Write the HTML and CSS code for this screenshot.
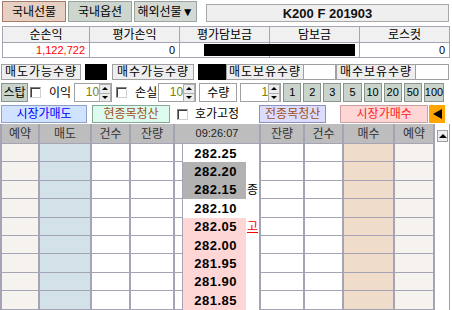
FILE: index.html
```html
<!DOCTYPE html>
<html lang="ko">
<head>
  <meta charset="UTF-8">
  <title>선물 주문</title>
  <link rel="stylesheet" href="styles.css">
</head>
<body>
<div class="screen">

  <!-- 상단 탭 -->
  <div class="top-bar">
    <div class="tab tab-on">국내선물</div>
    <div class="tab tab-opt">국내옵션</div>
    <div class="tab tab-more">해외선물▼</div>
    <div class="title">K200 F 201903</div>
  </div>

  <!-- 손익 요약 -->
  <div class="summary">
    <div class="sh">순손익</div>
    <div class="sh">평가손익</div>
    <div class="sh">평가담보금</div>
    <div class="sh">담보금</div>
    <div class="sh">로스컷</div>
    <div class="sv red">1,122,722</div>
    <div class="sv">0</div>
    <div class="sv"><span class="mask mask-a"></span></div>
    <div class="sv sv-left"><span class="mask mask-b"></span></div>
    <div class="sv">0</div>
  </div>

  <!-- 수량 -->
  <div class="qty-row">
    <div class="lbl lbl-1">매도가능수량</div>
    <div class="blk blk-1"></div>
    <div class="lbl lbl-2">매수가능수량</div>
    <div class="blk blk-2"></div>
    <div class="lbl lbl-3">매도보유수량</div>
    <div class="wbox wbox-1"></div>
    <div class="lbl lbl-4">매수보유수량</div>
    <div class="wbox wbox-2"></div>
  </div>

  <!-- 스탑 -->
  <div class="stop-row">
    <div class="stop-btn">스탑</div>
    <span class="chk chk-1"></span>
    <span class="txt txt-gain">이익</span>
    <div class="spin spin-1"><span class="spin-val">10</span><span class="spin-btns"><i class="up"></i><i class="down"></i></span></div>
    <span class="chk chk-2"></span>
    <span class="txt txt-loss">손실</span>
    <div class="spin spin-2"><span class="spin-val">10</span><span class="spin-btns"><i class="up"></i><i class="down"></i></span></div>
    <div class="qty-lbl">수량</div>
    <div class="spin spin-3"><span class="spin-val">1</span><span class="spin-btns"><i class="up"></i><i class="down"></i></span></div>
    <div class="nums">
      <div class="num">1</div>
      <div class="num">2</div>
      <div class="num">3</div>
      <div class="num">5</div>
      <div class="num">10</div>
      <div class="num">20</div>
      <div class="num">50</div>
      <div class="num">100</div>
    </div>
  </div>

  <!-- 주문 버튼 -->
  <div class="action-row">
    <div class="act act-sell">시장가매도</div>
    <div class="act act-clear1">현종목청산</div>
    <span class="chk chk-3"></span>
    <span class="txt txt-fix">호가고정</span>
    <div class="act act-clear2">전종목청산</div>
    <div class="act act-buy">시장가매수</div>
    <div class="collapse"><i></i></div>
  </div>

  <!-- 호가창 -->
  <div class="book">
    <div class="h">예약</div>
    <div class="h">매도</div>
    <div class="h">건수</div>
    <div class="h">잔량</div>
    <div class="h h-time">09:26:07</div>
    <div class="h">잔량</div>
    <div class="h">건수</div>
    <div class="h">매수</div>
    <div class="h">예약</div>
    <div class="scroll"><div class="scroll-up"><i></i></div></div>

    <div class="c rsv"></div><div class="c sell"></div><div class="c"></div><div class="c"></div><div class="c gap"></div><div class="price">282.25</div><div class="mark"></div><div class="c"></div><div class="c"></div><div class="c buy"></div><div class="c rsv"></div>
    <div class="c rsv"></div><div class="c sell"></div><div class="c"></div><div class="c"></div><div class="c gap"></div><div class="price grey">282.20</div><div class="mark"></div><div class="c"></div><div class="c"></div><div class="c buy"></div><div class="c rsv"></div>
    <div class="c rsv"></div><div class="c sell"></div><div class="c"></div><div class="c"></div><div class="c gap"></div><div class="price grey">282.15</div><div class="mark">종</div><div class="c"></div><div class="c"></div><div class="c buy"></div><div class="c rsv"></div>
    <div class="c rsv"></div><div class="c sell"></div><div class="c"></div><div class="c"></div><div class="c gap"></div><div class="price">282.10</div><div class="mark"></div><div class="c"></div><div class="c"></div><div class="c buy"></div><div class="c rsv"></div>
    <div class="c rsv"></div><div class="c sell"></div><div class="c"></div><div class="c"></div><div class="c gap"></div><div class="price pink">282.05</div><div class="mark mark-high">고</div><div class="c"></div><div class="c"></div><div class="c buy"></div><div class="c rsv"></div>
    <div class="c rsv"></div><div class="c sell"></div><div class="c"></div><div class="c"></div><div class="c gap"></div><div class="price pink">282.00</div><div class="mark"></div><div class="c"></div><div class="c"></div><div class="c buy"></div><div class="c rsv"></div>
    <div class="c rsv"></div><div class="c sell"></div><div class="c"></div><div class="c"></div><div class="c gap"></div><div class="price pink">281.95</div><div class="mark"></div><div class="c"></div><div class="c"></div><div class="c buy"></div><div class="c rsv"></div>
    <div class="c rsv"></div><div class="c sell"></div><div class="c"></div><div class="c"></div><div class="c gap"></div><div class="price pink">281.90</div><div class="mark"></div><div class="c"></div><div class="c"></div><div class="c buy"></div><div class="c rsv"></div>
    <div class="c rsv"></div><div class="c sell"></div><div class="c"></div><div class="c"></div><div class="c gap"></div><div class="price pink">281.85</div><div class="mark"></div><div class="c"></div><div class="c"></div><div class="c buy"></div><div class="c rsv"></div>
  </div>

</div>
</body>
</html>
```

FILE: styles.css
```css
body {
  margin: 0;
  font-family: "Liberation Sans", "Noto Sans CJK KR", sans-serif;
  font-size: 12px;
  color: #000;
  background: #fff;
}
.screen {
  width: 452px;
  height: 310px;
  overflow: hidden;
}

/* 상단 탭 */
.top-bar {
  display: flex;
  align-items: flex-start;
  height: 21px;
  padding: 1px 0 0 2px;
}
.tab {
  box-sizing: border-box;
  height: 21px;
  margin-right: 2px;
  display: flex;
  align-items: center;
  justify-content: center;
  border: 1px solid #9aa49d;
  background: #ccd6cf;
  line-height: 1;
}
.tab-on { width: 64px; background: #e6d0c3; border-color: #a87a68; }
.tab-opt { width: 64px; }
.tab-more { width: 63px; background: #d3dad5; }
.title {
  box-sizing: border-box;
  width: 243px;
  height: 18px;
  margin: 3px 0 0 7px;
  border: 1px solid #a8a8a8;
  background: #efefef;
  font-size: 13px;
  font-weight: bold;
  display: flex;
  align-items: center;
  justify-content: center;
  color: #111;
}

/* 요약 */
.summary {
  display: grid;
  grid-template-columns: 87px 90px 90px 90px 90px;
  grid-template-rows: 16px 15px;
  width: fit-content;
  margin: 4px 0 0 2px;
  border-left: 1px solid #a4a4b4;
  border-top: 1px solid #a4a4b4;
}
.sh, .sv {
  box-sizing: border-box;
  border-right: 1px solid #a4a4b4;
  border-bottom: 1px solid #a4a4b4;
  display: flex;
  align-items: center;
  line-height: 1;
}
.sh {
  background: #f0f0f0;
  justify-content: center;
}
.sv {
  justify-content: flex-end;
  padding-right: 4px;
  font-size: 11px;
}
.sv-left { justify-content: flex-start; }
.red { color: #ff0000; }
.mask {
  display: block;
  height: 12px;
  background: #000;
}
.mask-a { width: 66px; margin-right: -5px; }
.mask-b { width: 87px; }

/* 수량 */
.qty-row {
  display: flex;
  height: 16px;
  margin-top: 6px;
  padding-left: 1px;
}
.lbl {
  box-sizing: border-box;
  height: 16px;
  border: 1px solid #a0a0a0;
  background: #eeeeee;
  display: flex;
  align-items: center;
  justify-content: center;
  letter-spacing: 1px;
  line-height: 1;
}
.lbl-1 { width: 80px; }
.lbl-2 { width: 82px; margin-left: 5px; }
.lbl-3 { width: 78px; }
.lbl-4 { width: 80px; }
.blk { height: 16px; background: #000; }
.blk-1 { width: 22px; margin-left: 4px; }
.blk-2 { width: 28px; margin-left: 4px; }
.wbox {
  box-sizing: border-box;
  height: 16px;
  border: 1px solid #a0a0a0;
  border-left: none;
  background: #fff;
}
.wbox-1 { width: 32px; }
.wbox-2 { width: 33px; }

/* 스탑 */
.stop-row {
  display: flex;
  align-items: center;
  height: 19px;
  margin-top: 3px;
  padding-left: 1px;
}
.stop-btn {
  box-sizing: border-box;
  width: 27px;
  height: 19px;
  border: 1px solid #8a938c;
  background: #c8d4cc;
  display: flex;
  align-items: center;
  justify-content: center;
  line-height: 1;
}
.chk {
  box-sizing: border-box;
  width: 11px;
  height: 11px;
  border: 1px solid #808080;
  border-right-color: #d0d0d0;
  border-bottom-color: #d0d0d0;
  background: #fff;
  box-shadow: inset 1px 1px 0 #404040;
}
.chk-1 { margin-left: 2px; }
.chk-2 { margin-left: 4px; }
.chk-3 { margin-left: 7px; }
.txt { line-height: 1; }
.txt-gain { margin-left: 8px; }
.txt-loss { margin-left: 8px; }
.txt-fix { margin-left: 7px; }

.spin {
  box-sizing: border-box;
  display: flex;
  height: 19px;
  border: 1px solid #a0a0a0;
  background: #fff;
}
.spin-1 { width: 38px; margin-left: 3px; }
.spin-2 { width: 38px; margin-left: 1px; }
.spin-3 { width: 41px; margin-left: 3px; }
.spin-val {
  flex: 1;
  text-align: right;
  padding-right: 1px;
  color: #808000;
  font-size: 12px;
  line-height: 17px;
}
.spin-btns {
  width: 11px;
  display: flex;
  flex-direction: column;
}
.spin-btns i {
  flex: 1;
  display: flex;
  align-items: center;
  justify-content: center;
  background: #ececec;
  border: 1px solid #b0b0b0;
  margin: 0 0 -1px -1px;
}
.spin-btns i::before {
  content: "";
  border-left: 3px solid transparent;
  border-right: 3px solid transparent;
}
.spin-btns .up::before { border-bottom: 3px solid #000; }
.spin-btns .down::before { border-top: 3px solid #000; }

.qty-lbl {
  box-sizing: border-box;
  width: 38px;
  height: 19px;
  margin-left: 3px;
  border: 1px solid #a0a0a0;
  background: #fff;
  display: flex;
  align-items: center;
  justify-content: center;
  line-height: 1;
}
.nums {
  display: flex;
  gap: 2px;
  width: 161px;
  margin-left: 2px;
}
.num {
  flex: 1;
  box-sizing: border-box;
  height: 19px;
  border: 1px solid #8a938c;
  background: #c8d4cc;
  display: flex;
  align-items: center;
  justify-content: center;
  font-size: 11px;
  line-height: 1;
}

/* 주문 버튼 */
.action-row {
  display: flex;
  align-items: center;
  height: 18px;
  margin-top: 3px;
  padding-left: 1px;
}
.act {
  box-sizing: border-box;
  height: 18px;
  display: flex;
  align-items: center;
  justify-content: center;
  border: 1px solid #a0a0a0;
  line-height: 1;
}
.act-sell { width: 86px; background: #cfe2ff; border-color: #8ea0c8; color: #0000ff; }
.act-clear1 { width: 78px; margin-left: 5px; background: #dcfaee; border-color: #86a898; color: #a0501e; }
.act-clear2 { width: 67px; margin-left: 20px; background: #dcdcfc; border-color: #9090c0; color: #a0501e; }
.act-buy { width: 88px; margin-left: 14px; background: #ffd6d6; border-color: #c8a0a0; color: #ff2020; }
.collapse {
  width: 16px;
  height: 18px;
  margin-left: 1px;
  background: #ffa500;
  display: flex;
  align-items: center;
  justify-content: center;
}
.collapse i {
  border-top: 5px solid transparent;
  border-bottom: 5px solid transparent;
  border-right: 9px solid #000;
}

/* 호가창 */
.book {
  display: grid;
  grid-template-columns: 38px 52px 39px 44px 8px 63px 15px 44px 39px 51px 40px 15px;
  grid-template-rows: 20px repeat(9, 18.4px);
  margin-top: 1px;
  border-left: 2px solid #a4a4b4;
}
.h, .c {
  box-sizing: border-box;
  border-right: 2px solid #a4a4b4;
  border-bottom: 1px solid #a4a4b4;
}
.h {
  background: #bdbdbd;
  color: #333;
  display: flex;
  align-items: center;
  justify-content: center;
  line-height: 1;
}
.h-time {
  grid-column: span 3;
  font-size: 11px;
  color: #222;
}
.rsv { background: #f6f3ef; }
.sell { background: #d3e2e9; }
.buy { background: #f0dcca; }
.gap { border-right-width: 1px; }
.price {
  display: flex;
  align-items: center;
  justify-content: flex-end;
  padding-right: 9px;
  font-size: 13px;
  font-weight: bold;
  letter-spacing: 0.5px;
  background: #fff;
}
.grey { background: #b2b2b2; }
.pink { background: #ffd6d6; }
.mark {
  box-sizing: border-box;
  border-right: 2px solid #a4a4b4;
  display: flex;
  align-items: center;
  justify-content: center;
  font-size: 12px;
  line-height: 1;
}
.mark-high {
  color: #ff0000;
  text-decoration: underline;
}
.scroll {
  grid-column: 12;
  grid-row: 1 / span 10;
  border-right: 1px solid #a0a0a0;
  background: #fff;
}
.scroll-up {
  box-sizing: border-box;
  width: 11px;
  height: 12px;
  margin: 6px 0 0 2px;
  border: 1px solid #a0a0a0;
  background: #f0ecec;
  display: flex;
  align-items: center;
  justify-content: center;
}
.scroll-up i {
  border-left: 4px solid transparent;
  border-right: 4px solid transparent;
  border-bottom: 4px solid #000;
}
```
